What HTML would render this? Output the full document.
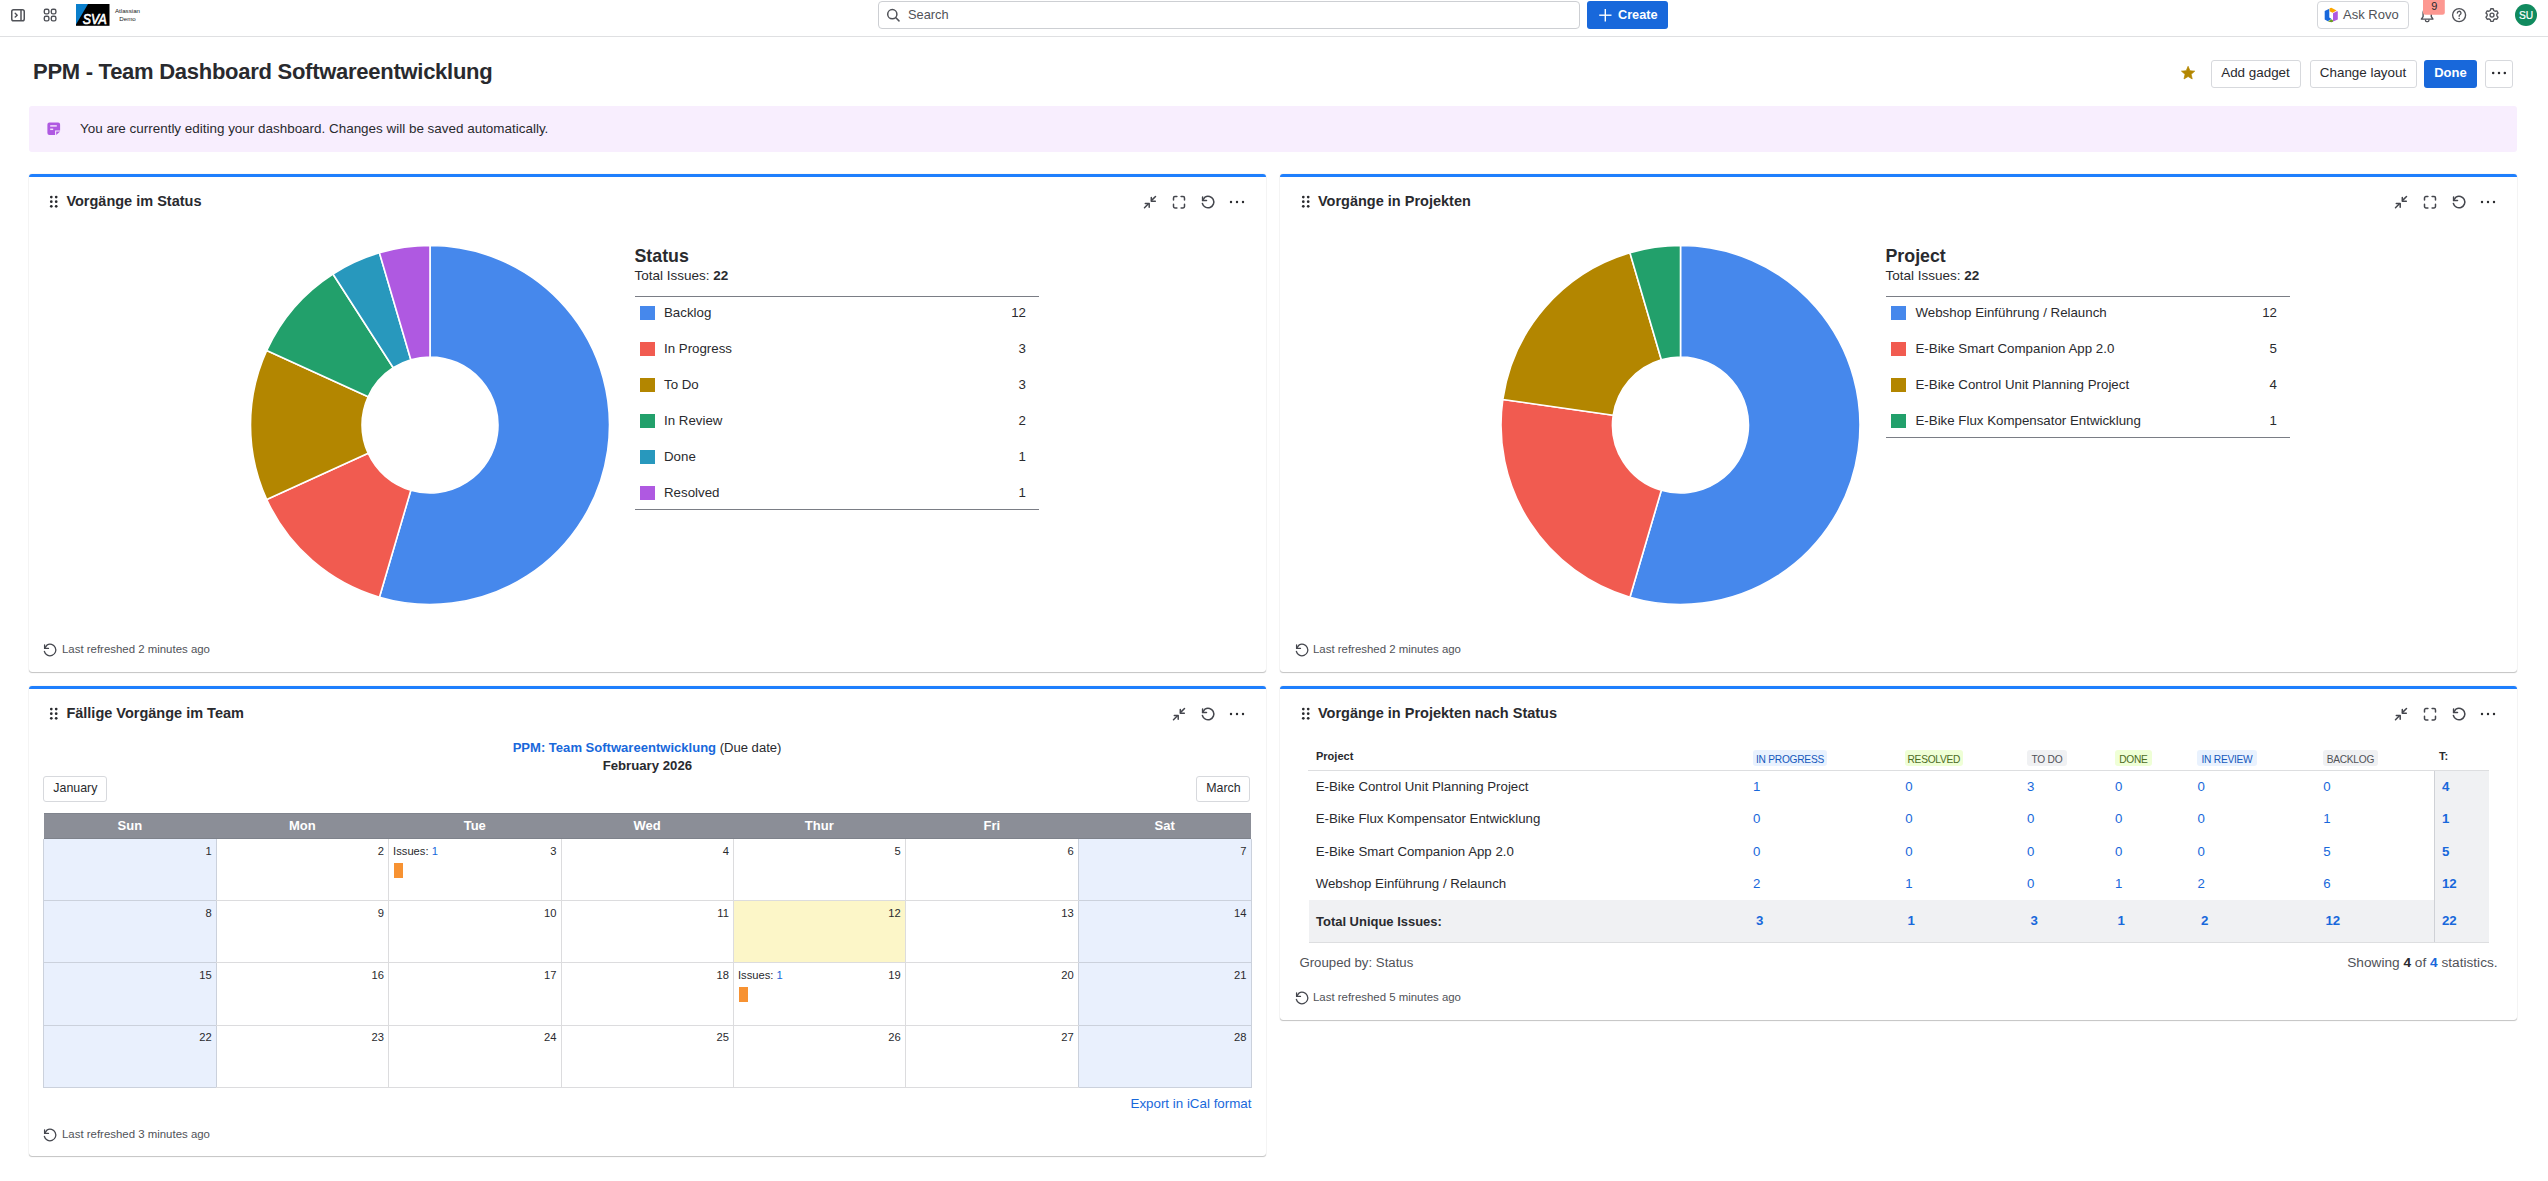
<!DOCTYPE html>
<html><head><meta charset="utf-8"><title>PPM - Team Dashboard Softwareentwicklung</title>
<style>
html,body{margin:0;padding:0;background:#fff;}
body{width:2548px;height:1181px;overflow:hidden;position:relative;font-family:"Liberation Sans", sans-serif;color:#292a2e;}
b{font-weight:bold;}
</style></head><body>
<div style="position:absolute;left:0px;top:36px;width:2548px;height:1px;background:#dfe0e2;"></div><div class="" style="position:absolute;top:8.25px;font-size:6.2px;line-height:1;font-weight:normal;color:#222;white-space:nowrap;left:127.5px;transform:translateX(-50%);">Atlassian</div><div class="" style="position:absolute;top:16.25px;font-size:6.2px;line-height:1;font-weight:normal;color:#222;white-space:nowrap;left:127.5px;transform:translateX(-50%);">Demo</div><div style="position:absolute;left:878px;top:1px;width:702px;height:28px;border:1px solid #cdcfd3;border-radius:4px;box-sizing:border-box;"></div><div class="" style="position:absolute;top:8.66px;font-size:12.8px;line-height:1;font-weight:normal;color:#505258;white-space:nowrap;left:908px;">Search</div><div style="position:absolute;left:1587px;top:1px;width:81px;height:28px;background:#1868db;border-radius:3px;"></div><div class="" style="position:absolute;top:8.75px;font-size:12.7px;line-height:1;font-weight:bold;color:#fff;white-space:nowrap;left:1618px;">Create</div><div style="position:absolute;left:2317px;top:1px;width:92px;height:28px;border:1px solid #d4d6da;border-radius:4px;box-sizing:border-box;"></div><div class="" style="position:absolute;top:8.49px;font-size:13px;line-height:1;font-weight:normal;color:#505258;white-space:nowrap;left:2343px;">Ask Rovo</div><div class="" style="position:absolute;top:60.87px;font-size:22px;line-height:1;font-weight:bold;color:#292a2e;white-space:nowrap;letter-spacing:-0.27px;left:33px;">PPM - Team Dashboard Softwareentwicklung</div><div style="position:absolute;left:2210.5px;top:59.5px;width:90.0px;height:28.0px;border:1px solid #d7d9dd;border-radius:3px;box-sizing:border-box;"></div><div class="" style="position:absolute;top:66.15px;font-size:13.4px;line-height:1;font-weight:normal;color:#292a2e;white-space:nowrap;left:2255.5px;transform:translateX(-50%);">Add gadget</div><div style="position:absolute;left:2309.5px;top:59.5px;width:107.0px;height:28.0px;border:1px solid #d7d9dd;border-radius:3px;box-sizing:border-box;"></div><div class="" style="position:absolute;top:66.15px;font-size:13.4px;line-height:1;font-weight:normal;color:#292a2e;white-space:nowrap;left:2363.0px;transform:translateX(-50%);">Change layout</div><div style="position:absolute;left:2424.2px;top:59.5px;width:52.5px;height:28.0px;background:#1868db;border-radius:3px;"></div><div class="" style="position:absolute;top:66.49px;font-size:13px;line-height:1;font-weight:bold;color:#fff;white-space:nowrap;left:2450.45px;transform:translateX(-50%);">Done</div><div style="position:absolute;left:2485.4px;top:59.5px;width:27.199999999999818px;height:28.0px;border:1px solid #d7d9dd;border-radius:3px;box-sizing:border-box;"></div><div style="position:absolute;left:29px;top:106px;width:2488px;height:46px;background:#f8eefe;border-radius:3px;"></div><div class="" style="position:absolute;top:122.12px;font-size:13.44px;line-height:1;font-weight:normal;color:#292a2e;white-space:nowrap;left:80px;">You are currently editing your dashboard. Changes will be saved automatically.</div><div style="position:absolute;left:29px;top:174px;width:1237px;height:498px;background:#fff;border-radius:3px;box-shadow:0 1px 1px rgba(0,0,0,0.22),0 0 1px rgba(0,0,0,0.26);"></div><div style="position:absolute;left:29px;top:174px;width:1237px;height:3px;background:#1f7ffd;border-radius:3px 3px 0 0;"></div><div style="position:absolute;left:1280px;top:174px;width:1237px;height:498px;background:#fff;border-radius:3px;box-shadow:0 1px 1px rgba(0,0,0,0.22),0 0 1px rgba(0,0,0,0.26);"></div><div style="position:absolute;left:1280px;top:174px;width:1237px;height:3px;background:#1f7ffd;border-radius:3px 3px 0 0;"></div><div style="position:absolute;left:29px;top:686px;width:1237px;height:470px;background:#fff;border-radius:3px;box-shadow:0 1px 1px rgba(0,0,0,0.22),0 0 1px rgba(0,0,0,0.26);"></div><div style="position:absolute;left:29px;top:686px;width:1237px;height:3px;background:#1f7ffd;border-radius:3px 3px 0 0;"></div><div style="position:absolute;left:1280px;top:686px;width:1237px;height:334px;background:#fff;border-radius:3px;box-shadow:0 1px 1px rgba(0,0,0,0.22),0 0 1px rgba(0,0,0,0.26);"></div><div style="position:absolute;left:1280px;top:686px;width:1237px;height:3px;background:#1f7ffd;border-radius:3px 3px 0 0;"></div><div class="" style="position:absolute;top:194.22px;font-size:14.5px;line-height:1;font-weight:bold;color:#292a2e;white-space:nowrap;left:66.4px;">Vorgänge im Status</div><div class="" style="position:absolute;top:194.22px;font-size:14.5px;line-height:1;font-weight:bold;color:#292a2e;white-space:nowrap;left:1318px;">Vorgänge in Projekten</div><div class="" style="position:absolute;top:706.22px;font-size:14.5px;line-height:1;font-weight:bold;color:#292a2e;white-space:nowrap;left:66.4px;">Fällige Vorgänge im Team</div><div class="" style="position:absolute;top:706.22px;font-size:14.5px;line-height:1;font-weight:bold;color:#292a2e;white-space:nowrap;left:1318px;">Vorgänge in Projekten nach Status</div><div class="" style="position:absolute;top:247.63px;font-size:17.8px;line-height:1;font-weight:bold;color:#292a2e;white-space:nowrap;left:634.5px;">Status</div><div class="" style="position:absolute;top:269.07px;font-size:13.5px;line-height:1;font-weight:normal;color:#292a2e;white-space:nowrap;left:634.5px;">Total Issues: <b>22</b></div><div style="position:absolute;left:634.5px;top:296px;width:404.5px;height:1px;background:#7a7d85;"></div><div style="position:absolute;left:640.3px;top:306px;width:15.0px;height:14px;background:#4688ec;"></div><div class="" style="position:absolute;top:306.24px;font-size:13.3px;line-height:1;font-weight:normal;color:#292a2e;white-space:nowrap;left:664px;">Backlog</div><div class="" style="position:absolute;top:306.24px;font-size:13.3px;line-height:1;font-weight:normal;color:#292a2e;white-space:nowrap;right:1522px;">12</div><div style="position:absolute;left:640.3px;top:342px;width:15.0px;height:14px;background:#f15b50;"></div><div class="" style="position:absolute;top:342.24px;font-size:13.3px;line-height:1;font-weight:normal;color:#292a2e;white-space:nowrap;left:664px;">In Progress</div><div class="" style="position:absolute;top:342.24px;font-size:13.3px;line-height:1;font-weight:normal;color:#292a2e;white-space:nowrap;right:1522px;">3</div><div style="position:absolute;left:640.3px;top:378px;width:15.0px;height:14px;background:#b38600;"></div><div class="" style="position:absolute;top:378.24px;font-size:13.3px;line-height:1;font-weight:normal;color:#292a2e;white-space:nowrap;left:664px;">To Do</div><div class="" style="position:absolute;top:378.24px;font-size:13.3px;line-height:1;font-weight:normal;color:#292a2e;white-space:nowrap;right:1522px;">3</div><div style="position:absolute;left:640.3px;top:414px;width:15.0px;height:14px;background:#22a06b;"></div><div class="" style="position:absolute;top:414.24px;font-size:13.3px;line-height:1;font-weight:normal;color:#292a2e;white-space:nowrap;left:664px;">In Review</div><div class="" style="position:absolute;top:414.24px;font-size:13.3px;line-height:1;font-weight:normal;color:#292a2e;white-space:nowrap;right:1522px;">2</div><div style="position:absolute;left:640.3px;top:450px;width:15.0px;height:14px;background:#2898bd;"></div><div class="" style="position:absolute;top:450.24px;font-size:13.3px;line-height:1;font-weight:normal;color:#292a2e;white-space:nowrap;left:664px;">Done</div><div class="" style="position:absolute;top:450.24px;font-size:13.3px;line-height:1;font-weight:normal;color:#292a2e;white-space:nowrap;right:1522px;">1</div><div style="position:absolute;left:640.3px;top:486px;width:15.0px;height:14px;background:#af59e1;"></div><div class="" style="position:absolute;top:486.24px;font-size:13.3px;line-height:1;font-weight:normal;color:#292a2e;white-space:nowrap;left:664px;">Resolved</div><div class="" style="position:absolute;top:486.24px;font-size:13.3px;line-height:1;font-weight:normal;color:#292a2e;white-space:nowrap;right:1522px;">1</div><div style="position:absolute;left:634.5px;top:508.70000000000005px;width:404.5px;height:1.0px;background:#7a7d85;"></div><div class="" style="position:absolute;top:247.63px;font-size:17.8px;line-height:1;font-weight:bold;color:#292a2e;white-space:nowrap;left:1885.5px;">Project</div><div class="" style="position:absolute;top:269.07px;font-size:13.5px;line-height:1;font-weight:normal;color:#292a2e;white-space:nowrap;left:1885.5px;">Total Issues: <b>22</b></div><div style="position:absolute;left:1885.5px;top:296px;width:404.5px;height:1px;background:#7a7d85;"></div><div style="position:absolute;left:1891px;top:306px;width:15px;height:14px;background:#4688ec;"></div><div class="" style="position:absolute;top:306.24px;font-size:13.3px;line-height:1;font-weight:normal;color:#292a2e;white-space:nowrap;left:1915.5px;">Webshop Einführung / Relaunch</div><div class="" style="position:absolute;top:306.24px;font-size:13.3px;line-height:1;font-weight:normal;color:#292a2e;white-space:nowrap;right:271px;">12</div><div style="position:absolute;left:1891px;top:342px;width:15px;height:14px;background:#f15b50;"></div><div class="" style="position:absolute;top:342.24px;font-size:13.3px;line-height:1;font-weight:normal;color:#292a2e;white-space:nowrap;left:1915.5px;">E-Bike Smart Companion App 2.0</div><div class="" style="position:absolute;top:342.24px;font-size:13.3px;line-height:1;font-weight:normal;color:#292a2e;white-space:nowrap;right:271px;">5</div><div style="position:absolute;left:1891px;top:378px;width:15px;height:14px;background:#b38600;"></div><div class="" style="position:absolute;top:378.24px;font-size:13.3px;line-height:1;font-weight:normal;color:#292a2e;white-space:nowrap;left:1915.5px;">E-Bike Control Unit Planning Project</div><div class="" style="position:absolute;top:378.24px;font-size:13.3px;line-height:1;font-weight:normal;color:#292a2e;white-space:nowrap;right:271px;">4</div><div style="position:absolute;left:1891px;top:414px;width:15px;height:14px;background:#22a06b;"></div><div class="" style="position:absolute;top:414.24px;font-size:13.3px;line-height:1;font-weight:normal;color:#292a2e;white-space:nowrap;left:1915.5px;">E-Bike Flux Kompensator Entwicklung</div><div class="" style="position:absolute;top:414.24px;font-size:13.3px;line-height:1;font-weight:normal;color:#292a2e;white-space:nowrap;right:271px;">1</div><div style="position:absolute;left:1885.5px;top:436.7px;width:404.5px;height:1.0px;background:#7a7d85;"></div><div class="" style="position:absolute;top:643.82px;font-size:11.43px;line-height:1;font-weight:normal;color:#505258;white-space:nowrap;left:62px;">Last refreshed 2 minutes ago</div><div class="" style="position:absolute;top:643.82px;font-size:11.43px;line-height:1;font-weight:normal;color:#505258;white-space:nowrap;left:1313px;">Last refreshed 2 minutes ago</div><div class="" style="position:absolute;top:1128.82px;font-size:11.43px;line-height:1;font-weight:normal;color:#505258;white-space:nowrap;left:62px;">Last refreshed 3 minutes ago</div><div class="" style="position:absolute;top:991.82px;font-size:11.43px;line-height:1;font-weight:normal;color:#505258;white-space:nowrap;left:1313px;">Last refreshed 5 minutes ago</div><div style="position:absolute;left:0;width:1294px;top:741.45px;text-align:center;font-size:13.05px;line-height:1;white-space:nowrap;color:#292a2e"><span style="color:#1868db;font-weight:bold">PPM: Team Softwareentwicklung</span> (Due date)</div><div class="" style="position:absolute;top:759.32px;font-size:13.2px;line-height:1;font-weight:bold;color:#292a2e;white-space:nowrap;left:647.35px;transform:translateX(-50%);">February 2026</div><div style="position:absolute;left:43.3px;top:775.5px;width:64.2px;height:26.0px;border:1px solid #d7d9dd;border-radius:3px;box-sizing:border-box;"></div><div class="" style="position:absolute;top:782.00px;font-size:12.4px;line-height:1;font-weight:normal;color:#292a2e;white-space:nowrap;left:75.4px;transform:translateX(-50%);">January</div><div style="position:absolute;left:1196.4px;top:775.5px;width:54.09999999999991px;height:26.0px;border:1px solid #d7d9dd;border-radius:3px;box-sizing:border-box;"></div><div class="" style="position:absolute;top:782.00px;font-size:12.4px;line-height:1;font-weight:normal;color:#292a2e;white-space:nowrap;left:1223.5px;transform:translateX(-50%);">March</div><div style="position:absolute;left:43.5px;top:813px;width:1207.5px;height:26px;background:#8b8e97;"></div><div style="position:absolute;left:43.5px;top:813px;width:1207.5px;height:1px;background:#80848d;"></div><div style="position:absolute;left:43.5px;top:838px;width:1207.5px;height:1px;background:#7e828b;"></div><div class="" style="position:absolute;top:819.49px;font-size:13.0px;line-height:1;font-weight:bold;color:#fff;white-space:nowrap;left:129.9px;transform:translateX(-50%);">Sun</div><div class="" style="position:absolute;top:819.49px;font-size:13.0px;line-height:1;font-weight:bold;color:#fff;white-space:nowrap;left:302.4px;transform:translateX(-50%);">Mon</div><div class="" style="position:absolute;top:819.49px;font-size:13.0px;line-height:1;font-weight:bold;color:#fff;white-space:nowrap;left:474.75px;transform:translateX(-50%);">Tue</div><div class="" style="position:absolute;top:819.49px;font-size:13.0px;line-height:1;font-weight:bold;color:#fff;white-space:nowrap;left:647.2px;transform:translateX(-50%);">Wed</div><div class="" style="position:absolute;top:819.49px;font-size:13.0px;line-height:1;font-weight:bold;color:#fff;white-space:nowrap;left:819.3px;transform:translateX(-50%);">Thur</div><div class="" style="position:absolute;top:819.49px;font-size:13.0px;line-height:1;font-weight:bold;color:#fff;white-space:nowrap;left:991.75px;transform:translateX(-50%);">Fri</div><div class="" style="position:absolute;top:819.49px;font-size:13.0px;line-height:1;font-weight:bold;color:#fff;white-space:nowrap;left:1164.65px;transform:translateX(-50%);">Sat</div><div style="position:absolute;left:43.5px;top:839px;width:172.8px;height:61.39999999999998px;background:#e9f0fd;"></div><div style="position:absolute;left:43.5px;top:900.4px;width:172.8px;height:62.30000000000007px;background:#e9f0fd;"></div><div style="position:absolute;left:43.5px;top:962.7px;width:172.8px;height:62.59999999999991px;background:#e9f0fd;"></div><div style="position:absolute;left:43.5px;top:1025.3px;width:172.8px;height:62.200000000000045px;background:#e9f0fd;"></div><div style="position:absolute;left:733.4px;top:900.4px;width:171.80000000000007px;height:62.30000000000007px;background:#fcf6c8;"></div><div style="position:absolute;left:1078.3px;top:839px;width:172.70000000000005px;height:61.39999999999998px;background:#e9f0fd;"></div><div style="position:absolute;left:1078.3px;top:900.4px;width:172.70000000000005px;height:62.30000000000007px;background:#e9f0fd;"></div><div style="position:absolute;left:1078.3px;top:962.7px;width:172.70000000000005px;height:62.59999999999991px;background:#e9f0fd;"></div><div style="position:absolute;left:1078.3px;top:1025.3px;width:172.70000000000005px;height:62.200000000000045px;background:#e9f0fd;"></div><div style="position:absolute;left:43.0px;top:839px;width:1.0px;height:248.5px;background:#cbd1dc;"></div><div style="position:absolute;left:215.8px;top:839px;width:1.0px;height:248.5px;background:#cbd1dc;"></div><div style="position:absolute;left:388.0px;top:839px;width:1.0px;height:248.5px;background:#dcdcde;"></div><div style="position:absolute;left:560.5px;top:839px;width:1.0px;height:248.5px;background:#dcdcde;"></div><div style="position:absolute;left:732.9px;top:839px;width:1.0px;height:248.5px;background:#dcdcde;"></div><div style="position:absolute;left:904.7px;top:839px;width:1.0px;height:248.5px;background:#dcdcde;"></div><div style="position:absolute;left:1077.8px;top:839px;width:1.0px;height:248.5px;background:#cbd1dc;"></div><div style="position:absolute;left:1250.5px;top:839px;width:1.0px;height:248.5px;background:#cbd1dc;"></div><div style="position:absolute;left:43.5px;top:899.9px;width:1207.5px;height:1.0px;background:#dcdcde;"></div><div style="position:absolute;left:43.5px;top:899.9px;width:172.3px;height:1.0px;background:#cbd1dc;"></div><div style="position:absolute;left:1078.8px;top:899.9px;width:172.20000000000005px;height:1.0px;background:#cbd1dc;"></div><div style="position:absolute;left:43.5px;top:962.2px;width:1207.5px;height:1.0px;background:#dcdcde;"></div><div style="position:absolute;left:43.5px;top:962.2px;width:172.3px;height:1.0px;background:#cbd1dc;"></div><div style="position:absolute;left:1078.8px;top:962.2px;width:172.20000000000005px;height:1.0px;background:#cbd1dc;"></div><div style="position:absolute;left:43.5px;top:1024.8px;width:1207.5px;height:1.0px;background:#dcdcde;"></div><div style="position:absolute;left:43.5px;top:1024.8px;width:172.3px;height:1.0px;background:#cbd1dc;"></div><div style="position:absolute;left:1078.8px;top:1024.8px;width:172.20000000000005px;height:1.0px;background:#cbd1dc;"></div><div style="position:absolute;left:43.5px;top:1087.0px;width:1207.5px;height:1.0px;background:#dcdcde;"></div><div style="position:absolute;left:43.5px;top:1087.0px;width:172.3px;height:1.0px;background:#cbd1dc;"></div><div style="position:absolute;left:1078.8px;top:1087.0px;width:172.20000000000005px;height:1.0px;background:#cbd1dc;"></div><div class="" style="position:absolute;top:846.02px;font-size:11.2px;line-height:1;font-weight:normal;color:#292a2e;white-space:nowrap;right:2336.2px;">1</div><div class="" style="position:absolute;top:908.02px;font-size:11.2px;line-height:1;font-weight:normal;color:#292a2e;white-space:nowrap;right:2336.2px;">8</div><div class="" style="position:absolute;top:970.02px;font-size:11.2px;line-height:1;font-weight:normal;color:#292a2e;white-space:nowrap;right:2336.2px;">15</div><div class="" style="position:absolute;top:1032.02px;font-size:11.2px;line-height:1;font-weight:normal;color:#292a2e;white-space:nowrap;right:2336.2px;">22</div><div class="" style="position:absolute;top:846.02px;font-size:11.2px;line-height:1;font-weight:normal;color:#292a2e;white-space:nowrap;right:2164.0px;">2</div><div class="" style="position:absolute;top:908.02px;font-size:11.2px;line-height:1;font-weight:normal;color:#292a2e;white-space:nowrap;right:2164.0px;">9</div><div class="" style="position:absolute;top:970.02px;font-size:11.2px;line-height:1;font-weight:normal;color:#292a2e;white-space:nowrap;right:2164.0px;">16</div><div class="" style="position:absolute;top:1032.02px;font-size:11.2px;line-height:1;font-weight:normal;color:#292a2e;white-space:nowrap;right:2164.0px;">23</div><div class="" style="position:absolute;top:846.02px;font-size:11.2px;line-height:1;font-weight:normal;color:#292a2e;white-space:nowrap;right:1991.5px;">3</div><div class="" style="position:absolute;top:908.02px;font-size:11.2px;line-height:1;font-weight:normal;color:#292a2e;white-space:nowrap;right:1991.5px;">10</div><div class="" style="position:absolute;top:970.02px;font-size:11.2px;line-height:1;font-weight:normal;color:#292a2e;white-space:nowrap;right:1991.5px;">17</div><div class="" style="position:absolute;top:1032.02px;font-size:11.2px;line-height:1;font-weight:normal;color:#292a2e;white-space:nowrap;right:1991.5px;">24</div><div class="" style="position:absolute;top:846.02px;font-size:11.2px;line-height:1;font-weight:normal;color:#292a2e;white-space:nowrap;right:1819.1px;">4</div><div class="" style="position:absolute;top:908.02px;font-size:11.2px;line-height:1;font-weight:normal;color:#292a2e;white-space:nowrap;right:1819.1px;">11</div><div class="" style="position:absolute;top:970.02px;font-size:11.2px;line-height:1;font-weight:normal;color:#292a2e;white-space:nowrap;right:1819.1px;">18</div><div class="" style="position:absolute;top:1032.02px;font-size:11.2px;line-height:1;font-weight:normal;color:#292a2e;white-space:nowrap;right:1819.1px;">25</div><div class="" style="position:absolute;top:846.02px;font-size:11.2px;line-height:1;font-weight:normal;color:#292a2e;white-space:nowrap;right:1647.3px;">5</div><div class="" style="position:absolute;top:908.02px;font-size:11.2px;line-height:1;font-weight:normal;color:#292a2e;white-space:nowrap;right:1647.3px;">12</div><div class="" style="position:absolute;top:970.02px;font-size:11.2px;line-height:1;font-weight:normal;color:#292a2e;white-space:nowrap;right:1647.3px;">19</div><div class="" style="position:absolute;top:1032.02px;font-size:11.2px;line-height:1;font-weight:normal;color:#292a2e;white-space:nowrap;right:1647.3px;">26</div><div class="" style="position:absolute;top:846.02px;font-size:11.2px;line-height:1;font-weight:normal;color:#292a2e;white-space:nowrap;right:1474.2px;">6</div><div class="" style="position:absolute;top:908.02px;font-size:11.2px;line-height:1;font-weight:normal;color:#292a2e;white-space:nowrap;right:1474.2px;">13</div><div class="" style="position:absolute;top:970.02px;font-size:11.2px;line-height:1;font-weight:normal;color:#292a2e;white-space:nowrap;right:1474.2px;">20</div><div class="" style="position:absolute;top:1032.02px;font-size:11.2px;line-height:1;font-weight:normal;color:#292a2e;white-space:nowrap;right:1474.2px;">27</div><div class="" style="position:absolute;top:846.02px;font-size:11.2px;line-height:1;font-weight:normal;color:#292a2e;white-space:nowrap;right:1301.5px;">7</div><div class="" style="position:absolute;top:908.02px;font-size:11.2px;line-height:1;font-weight:normal;color:#292a2e;white-space:nowrap;right:1301.5px;">14</div><div class="" style="position:absolute;top:970.02px;font-size:11.2px;line-height:1;font-weight:normal;color:#292a2e;white-space:nowrap;right:1301.5px;">21</div><div class="" style="position:absolute;top:1032.02px;font-size:11.2px;line-height:1;font-weight:normal;color:#292a2e;white-space:nowrap;right:1301.5px;">28</div><div class="" style="position:absolute;top:846.02px;font-size:11.2px;line-height:1;font-weight:normal;color:#292a2e;white-space:nowrap;left:393.1px;">Issues: <span style="color:#1868db">1</span></div><div style="position:absolute;left:394.0px;top:863px;width:9.0px;height:15px;background:#f79232;"></div><div class="" style="position:absolute;top:970.02px;font-size:11.2px;line-height:1;font-weight:normal;color:#292a2e;white-space:nowrap;left:738.0px;">Issues: <span style="color:#1868db">1</span></div><div style="position:absolute;left:738.9px;top:987px;width:9.0px;height:15px;background:#f79232;"></div><div class="" style="position:absolute;top:1097.19px;font-size:13.36px;line-height:1;font-weight:normal;color:#1868db;white-space:nowrap;right:1296.5px;">Export in iCal format</div><div class="" style="position:absolute;top:751.19px;font-size:11px;line-height:1;font-weight:bold;color:#292a2e;white-space:nowrap;left:1316px;">Project</div><div style="position:absolute;left:1753px;top:750.2px;width:74px;height:15.5px;background:#e9f2fe;border-radius:3px;"></div><div class="" style="position:absolute;top:754.86px;font-size:10.2px;line-height:1;font-weight:normal;color:#1558bc;white-space:nowrap;letter-spacing:-0.25px;left:1790.0px;transform:translateX(-50%);">IN PROGRESS</div><div style="position:absolute;left:1905px;top:750.2px;width:57.700000000000045px;height:15.5px;background:#efffd6;border-radius:3px;"></div><div class="" style="position:absolute;top:754.86px;font-size:10.2px;line-height:1;font-weight:normal;color:#4c6b1f;white-space:nowrap;letter-spacing:-0.25px;left:1933.85px;transform:translateX(-50%);">RESOLVED</div><div style="position:absolute;left:2027px;top:750.2px;width:39.80000000000018px;height:15.5px;background:#f0f1f3;border-radius:3px;"></div><div class="" style="position:absolute;top:754.86px;font-size:10.2px;line-height:1;font-weight:normal;color:#505258;white-space:nowrap;letter-spacing:-0.25px;left:2046.9px;transform:translateX(-50%);">TO DO</div><div style="position:absolute;left:2115.1px;top:750.2px;width:36.59999999999991px;height:15.5px;background:#efffd6;border-radius:3px;"></div><div class="" style="position:absolute;top:754.86px;font-size:10.2px;line-height:1;font-weight:normal;color:#4c6b1f;white-space:nowrap;letter-spacing:-0.25px;left:2133.3999999999996px;transform:translateX(-50%);">DONE</div><div style="position:absolute;left:2197px;top:750.2px;width:60px;height:15.5px;background:#e9f2fe;border-radius:3px;"></div><div class="" style="position:absolute;top:754.86px;font-size:10.2px;line-height:1;font-weight:normal;color:#1558bc;white-space:nowrap;letter-spacing:-0.25px;left:2227.0px;transform:translateX(-50%);">IN REVIEW</div><div style="position:absolute;left:2323.2px;top:750.2px;width:54.40000000000009px;height:15.5px;background:#f0f1f3;border-radius:3px;"></div><div class="" style="position:absolute;top:754.86px;font-size:10.2px;line-height:1;font-weight:normal;color:#505258;white-space:nowrap;letter-spacing:-0.25px;left:2350.3999999999996px;transform:translateX(-50%);">BACKLOG</div><div class="" style="position:absolute;top:751.19px;font-size:11px;line-height:1;font-weight:bold;color:#292a2e;white-space:nowrap;left:2439px;">T:</div><div style="position:absolute;left:2434.5px;top:770.5px;width:54.5px;height:171.79999999999995px;background:#f0f1f3;"></div><div style="position:absolute;left:1309px;top:900.3px;width:1125.5px;height:42.0px;background:#f0f1f3;"></div><div style="position:absolute;left:2434px;top:770.5px;width:1px;height:171.79999999999995px;background:#cfd1d6;"></div><div style="position:absolute;left:1308px;top:769.8px;width:1181px;height:1.5px;background:#dddee0;"></div><div style="position:absolute;left:1309px;top:941.8px;width:1180px;height:1.2000000000000455px;background:#dddee0;"></div><div class="" style="position:absolute;top:780.27px;font-size:13.26px;line-height:1;font-weight:normal;color:#292a2e;white-space:nowrap;left:1315.7px;">E-Bike Control Unit Planning Project</div><div class="" style="position:absolute;top:780.27px;font-size:13.26px;line-height:1;font-weight:normal;color:#1868db;white-space:nowrap;left:1753px;">1</div><div class="" style="position:absolute;top:780.27px;font-size:13.26px;line-height:1;font-weight:normal;color:#1868db;white-space:nowrap;left:1905.3px;">0</div><div class="" style="position:absolute;top:780.27px;font-size:13.26px;line-height:1;font-weight:normal;color:#1868db;white-space:nowrap;left:2027px;">3</div><div class="" style="position:absolute;top:780.27px;font-size:13.26px;line-height:1;font-weight:normal;color:#1868db;white-space:nowrap;left:2115px;">0</div><div class="" style="position:absolute;top:780.27px;font-size:13.26px;line-height:1;font-weight:normal;color:#1868db;white-space:nowrap;left:2197.5px;">0</div><div class="" style="position:absolute;top:780.27px;font-size:13.26px;line-height:1;font-weight:normal;color:#1868db;white-space:nowrap;left:2323.2px;">0</div><div class="" style="position:absolute;top:780.27px;font-size:13.26px;line-height:1;font-weight:bold;color:#1868db;white-space:nowrap;left:2442px;">4</div><div class="" style="position:absolute;top:812.27px;font-size:13.26px;line-height:1;font-weight:normal;color:#292a2e;white-space:nowrap;left:1315.7px;">E-Bike Flux Kompensator Entwicklung</div><div class="" style="position:absolute;top:812.27px;font-size:13.26px;line-height:1;font-weight:normal;color:#1868db;white-space:nowrap;left:1753px;">0</div><div class="" style="position:absolute;top:812.27px;font-size:13.26px;line-height:1;font-weight:normal;color:#1868db;white-space:nowrap;left:1905.3px;">0</div><div class="" style="position:absolute;top:812.27px;font-size:13.26px;line-height:1;font-weight:normal;color:#1868db;white-space:nowrap;left:2027px;">0</div><div class="" style="position:absolute;top:812.27px;font-size:13.26px;line-height:1;font-weight:normal;color:#1868db;white-space:nowrap;left:2115px;">0</div><div class="" style="position:absolute;top:812.27px;font-size:13.26px;line-height:1;font-weight:normal;color:#1868db;white-space:nowrap;left:2197.5px;">0</div><div class="" style="position:absolute;top:812.27px;font-size:13.26px;line-height:1;font-weight:normal;color:#1868db;white-space:nowrap;left:2323.2px;">1</div><div class="" style="position:absolute;top:812.27px;font-size:13.26px;line-height:1;font-weight:bold;color:#1868db;white-space:nowrap;left:2442px;">1</div><div class="" style="position:absolute;top:845.27px;font-size:13.26px;line-height:1;font-weight:normal;color:#292a2e;white-space:nowrap;left:1315.7px;">E-Bike Smart Companion App 2.0</div><div class="" style="position:absolute;top:845.27px;font-size:13.26px;line-height:1;font-weight:normal;color:#1868db;white-space:nowrap;left:1753px;">0</div><div class="" style="position:absolute;top:845.27px;font-size:13.26px;line-height:1;font-weight:normal;color:#1868db;white-space:nowrap;left:1905.3px;">0</div><div class="" style="position:absolute;top:845.27px;font-size:13.26px;line-height:1;font-weight:normal;color:#1868db;white-space:nowrap;left:2027px;">0</div><div class="" style="position:absolute;top:845.27px;font-size:13.26px;line-height:1;font-weight:normal;color:#1868db;white-space:nowrap;left:2115px;">0</div><div class="" style="position:absolute;top:845.27px;font-size:13.26px;line-height:1;font-weight:normal;color:#1868db;white-space:nowrap;left:2197.5px;">0</div><div class="" style="position:absolute;top:845.27px;font-size:13.26px;line-height:1;font-weight:normal;color:#1868db;white-space:nowrap;left:2323.2px;">5</div><div class="" style="position:absolute;top:845.27px;font-size:13.26px;line-height:1;font-weight:bold;color:#1868db;white-space:nowrap;left:2442px;">5</div><div class="" style="position:absolute;top:877.27px;font-size:13.26px;line-height:1;font-weight:normal;color:#292a2e;white-space:nowrap;left:1315.7px;">Webshop Einführung / Relaunch</div><div class="" style="position:absolute;top:877.27px;font-size:13.26px;line-height:1;font-weight:normal;color:#1868db;white-space:nowrap;left:1753px;">2</div><div class="" style="position:absolute;top:877.27px;font-size:13.26px;line-height:1;font-weight:normal;color:#1868db;white-space:nowrap;left:1905.3px;">1</div><div class="" style="position:absolute;top:877.27px;font-size:13.26px;line-height:1;font-weight:normal;color:#1868db;white-space:nowrap;left:2027px;">0</div><div class="" style="position:absolute;top:877.27px;font-size:13.26px;line-height:1;font-weight:normal;color:#1868db;white-space:nowrap;left:2115px;">1</div><div class="" style="position:absolute;top:877.27px;font-size:13.26px;line-height:1;font-weight:normal;color:#1868db;white-space:nowrap;left:2197.5px;">2</div><div class="" style="position:absolute;top:877.27px;font-size:13.26px;line-height:1;font-weight:normal;color:#1868db;white-space:nowrap;left:2323.2px;">6</div><div class="" style="position:absolute;top:877.27px;font-size:13.26px;line-height:1;font-weight:bold;color:#1868db;white-space:nowrap;left:2442px;">12</div><div class="" style="position:absolute;top:914.51px;font-size:12.98px;line-height:1;font-weight:bold;color:#292a2e;white-space:nowrap;left:1316px;">Total Unique Issues:</div><div class="" style="position:absolute;top:914.27px;font-size:13.26px;line-height:1;font-weight:bold;color:#1868db;white-space:nowrap;left:1756px;">3</div><div class="" style="position:absolute;top:914.27px;font-size:13.26px;line-height:1;font-weight:bold;color:#1868db;white-space:nowrap;left:1907.6px;">1</div><div class="" style="position:absolute;top:914.27px;font-size:13.26px;line-height:1;font-weight:bold;color:#1868db;white-space:nowrap;left:2030.4px;">3</div><div class="" style="position:absolute;top:914.27px;font-size:13.26px;line-height:1;font-weight:bold;color:#1868db;white-space:nowrap;left:2117.4px;">1</div><div class="" style="position:absolute;top:914.27px;font-size:13.26px;line-height:1;font-weight:bold;color:#1868db;white-space:nowrap;left:2200.9px;">2</div><div class="" style="position:absolute;top:914.27px;font-size:13.26px;line-height:1;font-weight:bold;color:#1868db;white-space:nowrap;left:2325.5px;">12</div><div class="" style="position:absolute;top:914.27px;font-size:13.26px;line-height:1;font-weight:bold;color:#1868db;white-space:nowrap;left:2442px;">22</div><div class="" style="position:absolute;top:956.30px;font-size:13.23px;line-height:1;font-weight:normal;color:#505258;white-space:nowrap;left:1299.4px;">Grouped by: Status</div><div class="" style="position:absolute;top:955.93px;font-size:13.67px;line-height:1;font-weight:normal;color:#505258;white-space:nowrap;right:50.40000000000009px;">Showing <b style="color:#292a2e">4</b> of <b style="color:#1868db">4</b> statistics.</div>
<svg style="position:absolute;left:0;top:0" width="2548" height="1181" viewBox="0 0 2548 1181">
<rect x="11.75" y="9.75" width="12.5" height="11" rx="1.8" fill="none" stroke="#505258" stroke-width="1.5"/><line x1="21" y1="10" x2="21" y2="20.5" stroke="#505258" stroke-width="1.5"/><polyline points="15.2,13.3 17.2,15.2 15.2,17.1" fill="none" stroke="#505258" stroke-width="1.4" stroke-linecap="round" stroke-linejoin="round"/><rect x="44.300000000000004" y="9.3" width="4.6" height="4.6" rx="1.6" fill="none" stroke="#505258" stroke-width="1.4"/><rect x="44.300000000000004" y="16.3" width="4.6" height="4.6" rx="1.6" fill="none" stroke="#505258" stroke-width="1.4"/><rect x="51.300000000000004" y="9.3" width="4.6" height="4.6" rx="1.6" fill="none" stroke="#505258" stroke-width="1.4"/><rect x="51.300000000000004" y="16.3" width="4.6" height="4.6" rx="1.6" fill="none" stroke="#505258" stroke-width="1.4"/><rect x="76" y="4" width="33.5" height="21.8" fill="#000"/><polygon points="76,4 88,4 76,24.5" fill="#0a7fcc"/><text x="82.8" y="24.4" font-family="Liberation Sans" font-style="italic" font-size="15.2" fill="#fff" stroke="#fff" stroke-width="0.7" textLength="24" lengthAdjust="spacingAndGlyphs">SVA</text><circle cx="892.3" cy="14.2" r="4.6" fill="none" stroke="#505258" stroke-width="1.5"/><line x1="895.6" y1="17.5" x2="899" y2="20.9" stroke="#505258" stroke-width="1.5" stroke-linecap="round"/><line x1="1599.2" y1="15.2" x2="1611.5" y2="15.2" stroke="#fff" stroke-width="1.4"/><line x1="1605.3" y1="9" x2="1605.3" y2="21.5" stroke="#fff" stroke-width="1.4"/><polygon points="2324.7,10.9 2329.3,8.7 2329.3,17.6 2331.6,19.0 2327.8,21.2 2324.7,19.4" fill="#1868db"/><polygon points="2329.6,8.3 2331.4,7.8 2336.6,10.4 2332.5,12.8 2329.6,11.2" fill="#fca700"/><polygon points="2333.0,13.2 2337.3,10.9 2337.8,12 2337.8,19.4 2333.2,21.6 2333.0,21.2" fill="#af59e1"/><polygon points="2327.9,21.4 2331.8,19.3 2333.0,20.4 2333.0,21.8 2331.4,22.2" fill="#6a9a23"/><path d="M2421.4,19.1 H2433 L2431.3,16.6 V12.6 a4.1,4.1 0 0 0 -8.2,0 V16.6 Z" fill="none" stroke="#505258" stroke-width="1.4" stroke-linejoin="round"/><path d="M2425.5,19.6 v0.9 a1.1,1.1 0 0 0 1.1,1.1 h1.2 a1.1,1.1 0 0 0 1.1,-1.1 v-0.9" fill="none" stroke="#505258" stroke-width="1.3"/><path d="M2423,0 H2444.8 V12.3 a2.5,2.5 0 0 1 -2.5,2.5 H2425.5 a2.5,2.5 0 0 1 -2.5,-2.5 Z" fill="#fd9891"/><text x="2434.4" y="10" font-family="Liberation Sans" font-size="11" fill="#292a2e" text-anchor="middle">9</text><circle cx="2459.1" cy="15.1" r="6.5" fill="none" stroke="#505258" stroke-width="1.35"/><path d="M2457.3,13.1 a1.85,1.85 0 1 1 2.7,1.65 c-0.55,0.3 -0.85,0.65 -0.85,1.2 v0.35" fill="none" stroke="#505258" stroke-width="1.3" stroke-linecap="round"/><circle cx="2459.15" cy="18.5" r="0.8" fill="#505258"/><polygon points="2490.24,10.48 2490.78,8.77 2493.22,8.77 2493.76,10.48 2495.08,11.24 2496.83,10.85 2498.05,12.97 2496.84,14.28 2496.84,15.82 2498.05,17.13 2496.83,19.25 2495.08,18.86 2493.76,19.62 2493.22,21.33 2490.78,21.33 2490.24,19.62 2488.92,18.86 2487.17,19.25 2485.95,17.13 2487.16,15.82 2487.16,14.28 2485.95,12.97 2487.17,10.85 2488.92,11.24" fill="none" stroke="#505258" stroke-width="1.35" stroke-linejoin="round"/><circle cx="2492.0" cy="15.05" r="2.0" fill="none" stroke="#505258" stroke-width="1.35"/><circle cx="2526" cy="15" r="11" fill="#108a5e"/><text x="2526" y="18.6" font-family="Liberation Sans" font-size="10.2" fill="#fff" stroke="#fff" stroke-width="0.2" text-anchor="middle">SU</text><polygon points="2188.10,66.30 2189.98,70.71 2194.76,71.14 2191.14,74.29 2192.21,78.96 2188.10,76.50 2183.99,78.96 2185.06,74.29 2181.44,71.14 2186.22,70.71" fill="#b38600" stroke="#b38600" stroke-width="0.7" stroke-linejoin="round"/><circle cx="2493.2" cy="73.1" r="1.25" fill="#292a2e"/><circle cx="2499" cy="73.1" r="1.25" fill="#292a2e"/><circle cx="2504.8" cy="73.1" r="1.25" fill="#292a2e"/><path d="M47.4,124.4 a2,2 0 0 1 2,-2 H58.1 a2,2 0 0 1 2,2 V130.4 H55.1 V134.9 H49.4 a2,2 0 0 1 -2,-2 Z" fill="#af59e1"/><path d="M56.2,131.4 H60.1 L56.2,135 Z" fill="#af59e1"/><line x1="50.2" y1="125.9" x2="56.8" y2="125.9" stroke="#f3dffc" stroke-width="1.5"/><line x1="50.2" y1="129.3" x2="53.2" y2="129.3" stroke="#f3dffc" stroke-width="1.5"/><circle cx="51.30" cy="197.10" r="1.35" fill="#292a2e"/><circle cx="51.30" cy="201.70" r="1.35" fill="#292a2e"/><circle cx="51.30" cy="206.30" r="1.35" fill="#292a2e"/><circle cx="56.20" cy="197.10" r="1.35" fill="#292a2e"/><circle cx="56.20" cy="201.70" r="1.35" fill="#292a2e"/><circle cx="56.20" cy="206.30" r="1.35" fill="#292a2e"/><circle cx="1303.30" cy="197.10" r="1.35" fill="#292a2e"/><circle cx="1303.30" cy="201.70" r="1.35" fill="#292a2e"/><circle cx="1303.30" cy="206.30" r="1.35" fill="#292a2e"/><circle cx="1308.20" cy="197.10" r="1.35" fill="#292a2e"/><circle cx="1308.20" cy="201.70" r="1.35" fill="#292a2e"/><circle cx="1308.20" cy="206.30" r="1.35" fill="#292a2e"/><circle cx="51.30" cy="709.10" r="1.35" fill="#292a2e"/><circle cx="51.30" cy="713.70" r="1.35" fill="#292a2e"/><circle cx="51.30" cy="718.30" r="1.35" fill="#292a2e"/><circle cx="56.20" cy="709.10" r="1.35" fill="#292a2e"/><circle cx="56.20" cy="713.70" r="1.35" fill="#292a2e"/><circle cx="56.20" cy="718.30" r="1.35" fill="#292a2e"/><circle cx="1303.30" cy="709.10" r="1.35" fill="#292a2e"/><circle cx="1303.30" cy="713.70" r="1.35" fill="#292a2e"/><circle cx="1303.30" cy="718.30" r="1.35" fill="#292a2e"/><circle cx="1308.20" cy="709.10" r="1.35" fill="#292a2e"/><circle cx="1308.20" cy="713.70" r="1.35" fill="#292a2e"/><circle cx="1308.20" cy="718.30" r="1.35" fill="#292a2e"/><g fill="none" stroke="#44464d" stroke-width="1.5" stroke-linecap="round" stroke-linejoin="round"><path d="M1155.5,196.5 L1151.6,200.4"/><path d="M1151.3,197.4 V201.3 H1155.3"/><path d="M1144.5,207.7 L1148.4,203.8"/><path d="M1145.3,203.4 H1149.2 V207.2"/></g><g fill="none" stroke="#44464d" stroke-width="1.5" stroke-linecap="round"><path d="M1173.5,200.1 V197.9 a1.4,1.4 0 0 1 1.4,-1.4 H1176.9"/><path d="M1181.1,196.5 H1183.1 a1.4,1.4 0 0 1 1.4,1.4 V200.1"/><path d="M1184.5,204.29999999999998 V206.49999999999997 a1.4,1.4 0 0 1 -1.4,1.4 H1181.1"/><path d="M1176.9,207.89999999999998 H1174.9 a1.4,1.4 0 0 1 -1.4,-1.4 V204.29999999999998"/></g><g fill="none" stroke="#44464d" stroke-width="1.5" stroke-linecap="round" stroke-linejoin="round"><path d="M1202.40,203.50 A5.8,5.8 0 1 0 1204.93,197.08 L1202.60,200.40"/><path d="M1202.60,196.90 V200.40 H1206.50"/></g><circle cx="1231" cy="202" r="1.2" fill="#292a2e"/><circle cx="1237" cy="202" r="1.2" fill="#292a2e"/><circle cx="1243" cy="202" r="1.2" fill="#292a2e"/><g fill="none" stroke="#44464d" stroke-width="1.5" stroke-linecap="round" stroke-linejoin="round"><path d="M2406.5,196.5 L2402.6,200.4"/><path d="M2402.3,197.4 V201.3 H2406.3"/><path d="M2395.5,207.7 L2399.4,203.8"/><path d="M2396.3,203.4 H2400.2 V207.2"/></g><g fill="none" stroke="#44464d" stroke-width="1.5" stroke-linecap="round"><path d="M2424.5,200.1 V197.9 a1.4,1.4 0 0 1 1.4,-1.4 H2427.9"/><path d="M2432.1,196.5 H2434.1 a1.4,1.4 0 0 1 1.4,1.4 V200.1"/><path d="M2435.5,204.29999999999998 V206.49999999999997 a1.4,1.4 0 0 1 -1.4,1.4 H2432.1"/><path d="M2427.9,207.89999999999998 H2425.9 a1.4,1.4 0 0 1 -1.4,-1.4 V204.29999999999998"/></g><g fill="none" stroke="#44464d" stroke-width="1.5" stroke-linecap="round" stroke-linejoin="round"><path d="M2453.40,203.50 A5.8,5.8 0 1 0 2455.93,197.08 L2453.60,200.40"/><path d="M2453.60,196.90 V200.40 H2457.50"/></g><circle cx="2482" cy="202" r="1.2" fill="#292a2e"/><circle cx="2488" cy="202" r="1.2" fill="#292a2e"/><circle cx="2494" cy="202" r="1.2" fill="#292a2e"/><g fill="none" stroke="#44464d" stroke-width="1.5" stroke-linecap="round" stroke-linejoin="round"><path d="M1184.5,708.5 L1180.6,712.4"/><path d="M1180.3,709.4 V713.3 H1184.3"/><path d="M1173.5,719.7 L1177.4,715.8"/><path d="M1174.3,715.4 H1178.2 V719.2"/></g><g fill="none" stroke="#44464d" stroke-width="1.5" stroke-linecap="round" stroke-linejoin="round"><path d="M1202.40,715.50 A5.8,5.8 0 1 0 1204.93,709.08 L1202.60,712.40"/><path d="M1202.60,708.90 V712.40 H1206.50"/></g><circle cx="1231" cy="714" r="1.2" fill="#292a2e"/><circle cx="1237" cy="714" r="1.2" fill="#292a2e"/><circle cx="1243" cy="714" r="1.2" fill="#292a2e"/><g fill="none" stroke="#44464d" stroke-width="1.5" stroke-linecap="round" stroke-linejoin="round"><path d="M2406.5,708.5 L2402.6,712.4"/><path d="M2402.3,709.4 V713.3 H2406.3"/><path d="M2395.5,719.7 L2399.4,715.8"/><path d="M2396.3,715.4 H2400.2 V719.2"/></g><g fill="none" stroke="#44464d" stroke-width="1.5" stroke-linecap="round"><path d="M2424.5,712.1 V709.9 a1.4,1.4 0 0 1 1.4,-1.4 H2427.9"/><path d="M2432.1,708.5 H2434.1 a1.4,1.4 0 0 1 1.4,1.4 V712.1"/><path d="M2435.5,716.3000000000001 V718.5000000000001 a1.4,1.4 0 0 1 -1.4,1.4 H2432.1"/><path d="M2427.9,719.9000000000001 H2425.9 a1.4,1.4 0 0 1 -1.4,-1.4 V716.3000000000001"/></g><g fill="none" stroke="#44464d" stroke-width="1.5" stroke-linecap="round" stroke-linejoin="round"><path d="M2453.40,715.50 A5.8,5.8 0 1 0 2455.93,709.08 L2453.60,712.40"/><path d="M2453.60,708.90 V712.40 H2457.50"/></g><circle cx="2482" cy="714" r="1.2" fill="#292a2e"/><circle cx="2488" cy="714" r="1.2" fill="#292a2e"/><circle cx="2494" cy="714" r="1.2" fill="#292a2e"/><path d="M430.00,245.50 A179.5,179.5 0 1 1 379.43,597.23 L410.84,490.25 A68,68 0 1 0 430.00,357.00 Z" fill="#4688ec" stroke="#fff" stroke-width="1.6" stroke-linejoin="round"/><path d="M379.43,597.23 A179.5,179.5 0 0 1 266.72,499.57 L368.15,453.25 A68,68 0 0 0 410.84,490.25 Z" fill="#f15b50" stroke="#fff" stroke-width="1.6" stroke-linejoin="round"/><path d="M266.72,499.57 A179.5,179.5 0 0 1 266.72,350.43 L368.15,396.75 A68,68 0 0 0 368.15,453.25 Z" fill="#b38600" stroke="#fff" stroke-width="1.6" stroke-linejoin="round"/><path d="M266.72,350.43 A179.5,179.5 0 0 1 332.95,273.99 L393.24,367.79 A68,68 0 0 0 368.15,396.75 Z" fill="#22a06b" stroke="#fff" stroke-width="1.6" stroke-linejoin="round"/><path d="M332.95,273.99 A179.5,179.5 0 0 1 379.43,252.77 L410.84,359.75 A68,68 0 0 0 393.24,367.79 Z" fill="#2898bd" stroke="#fff" stroke-width="1.6" stroke-linejoin="round"/><path d="M379.43,252.77 A179.5,179.5 0 0 1 430.00,245.50 L430.00,357.00 A68,68 0 0 0 410.84,359.75 Z" fill="#af59e1" stroke="#fff" stroke-width="1.6" stroke-linejoin="round"/><path d="M1680.50,245.50 A179.5,179.5 0 1 1 1629.93,597.23 L1661.34,490.25 A68,68 0 1 0 1680.50,357.00 Z" fill="#4688ec" stroke="#fff" stroke-width="1.6" stroke-linejoin="round"/><path d="M1629.93,597.23 A179.5,179.5 0 0 1 1502.83,399.45 L1613.19,415.32 A68,68 0 0 0 1661.34,490.25 Z" fill="#f15b50" stroke="#fff" stroke-width="1.6" stroke-linejoin="round"/><path d="M1502.83,399.45 A179.5,179.5 0 0 1 1629.93,252.77 L1661.34,359.75 A68,68 0 0 0 1613.19,415.32 Z" fill="#b38600" stroke="#fff" stroke-width="1.6" stroke-linejoin="round"/><path d="M1629.93,252.77 A179.5,179.5 0 0 1 1680.50,245.50 L1680.50,357.00 A68,68 0 0 0 1661.34,359.75 Z" fill="#22a06b" stroke="#fff" stroke-width="1.6" stroke-linejoin="round"/><g fill="none" stroke="#44464d" stroke-width="1.3" stroke-linecap="round" stroke-linejoin="round"><path d="M44.40,651.50 A5.8,5.8 0 1 0 46.93,645.08 L44.60,648.40"/><path d="M44.60,644.90 V648.40 H48.50"/></g><g fill="none" stroke="#44464d" stroke-width="1.3" stroke-linecap="round" stroke-linejoin="round"><path d="M1296.40,651.50 A5.8,5.8 0 1 0 1298.93,645.08 L1296.60,648.40"/><path d="M1296.60,644.90 V648.40 H1300.50"/></g><g fill="none" stroke="#44464d" stroke-width="1.3" stroke-linecap="round" stroke-linejoin="round"><path d="M44.40,1136.50 A5.8,5.8 0 1 0 46.93,1130.08 L44.60,1133.40"/><path d="M44.60,1129.90 V1133.40 H48.50"/></g><g fill="none" stroke="#44464d" stroke-width="1.3" stroke-linecap="round" stroke-linejoin="round"><path d="M1296.40,999.50 A5.8,5.8 0 1 0 1298.93,993.08 L1296.60,996.40"/><path d="M1296.60,992.90 V996.40 H1300.50"/></g>
</svg>
</body></html>
